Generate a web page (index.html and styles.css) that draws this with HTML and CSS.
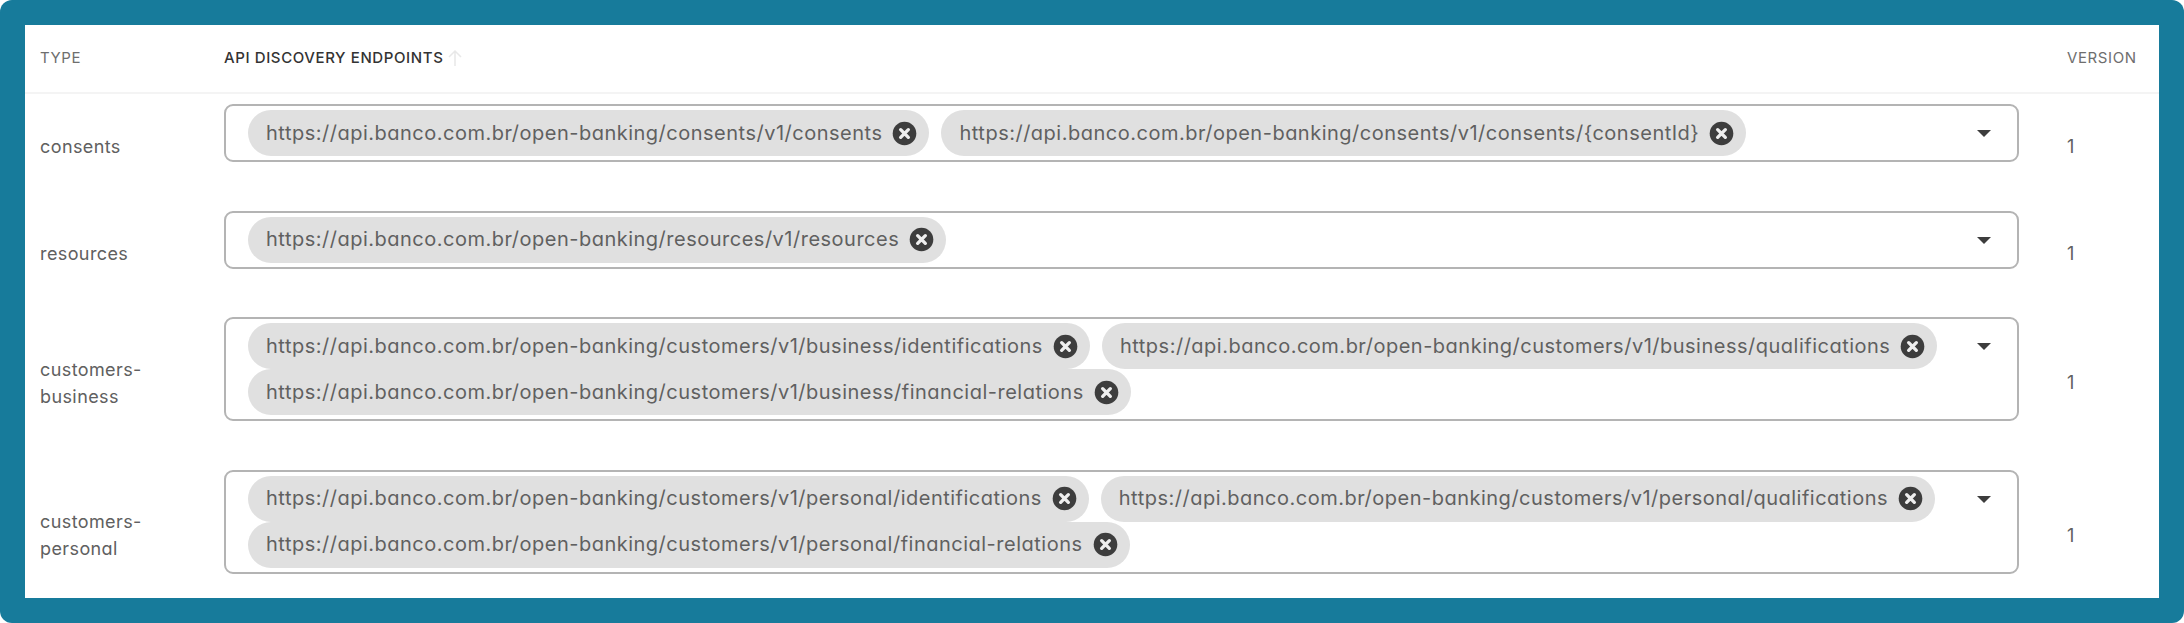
FILE: index.html
```html
<!DOCTYPE html>
<html lang="en">
<head>
  <meta charset="UTF-8" />
  <meta name="viewport" content="width=device-width, initial-scale=1.0" />
  <title>API Discovery Endpoints</title>
  <link rel="stylesheet" href="styles.css">
</head>
<body>
  <div class="frame">
    <div class="card">
      <div class="head">
        <span class="type-col">TYPE</span>
        <span class="endpoints-col">API DISCOVERY ENDPOINTS
          <svg class="sort" viewBox="0 0 16 18" width="16" height="18"><path d="M8 17V2M2 8l6-6 6 6" /></svg>
        </span>
        <span class="version-col">VERSION</span>
      </div>

      <div class="row">
        <div class="type-col">consents</div>
        <div class="field-cell">
          <div class="field">
            <div class="chips">
              <span class="chip">https://api.banco.com.br/open-banking/consents/v1/consents <svg class="x" viewBox="0 0 24 24"><use href="#close" /></svg></span>
              <span class="chip">https://api.banco.com.br/open-banking/consents/v1/consents/{consentId} <svg class="x" viewBox="0 0 24 24"><use href="#close" /></svg></span>
            </div>
            <span class="caret"></span>
          </div>
        </div>
        <div class="version-col">1</div>
      </div>

      <div class="row">
        <div class="type-col">resources</div>
        <div class="field-cell">
          <div class="field">
            <div class="chips">
              <span class="chip">https://api.banco.com.br/open-banking/resources/v1/resources <svg class="x" viewBox="0 0 24 24"><use href="#close" /></svg></span>
            </div>
            <span class="caret"></span>
          </div>
        </div>
        <div class="version-col">1</div>
      </div>

      <div class="row">
        <div class="type-col">customers-<br>business</div>
        <div class="field-cell">
          <div class="field">
            <div class="chips">
              <span class="chip">https://api.banco.com.br/open-banking/customers/v1/business/identifications <svg class="x" viewBox="0 0 24 24"><use href="#close" /></svg></span>
              <span class="chip">https://api.banco.com.br/open-banking/customers/v1/business/qualifications <svg class="x" viewBox="0 0 24 24"><use href="#close" /></svg></span>
              <span class="chip">https://api.banco.com.br/open-banking/customers/v1/business/financial-relations <svg class="x" viewBox="0 0 24 24"><use href="#close" /></svg></span>
            </div>
            <span class="caret"></span>
          </div>
        </div>
        <div class="version-col">1</div>
      </div>

      <div class="row">
        <div class="type-col">customers-<br>personal</div>
        <div class="field-cell">
          <div class="field">
            <div class="chips">
              <span class="chip">https://api.banco.com.br/open-banking/customers/v1/personal/identifications <svg class="x" viewBox="0 0 24 24"><use href="#close" /></svg></span>
              <span class="chip">https://api.banco.com.br/open-banking/customers/v1/personal/qualifications <svg class="x" viewBox="0 0 24 24"><use href="#close" /></svg></span>
              <span class="chip">https://api.banco.com.br/open-banking/customers/v1/personal/financial-relations <svg class="x" viewBox="0 0 24 24"><use href="#close" /></svg></span>
            </div>
            <span class="caret"></span>
          </div>
        </div>
        <div class="version-col">1</div>
      </div>
    </div>
  </div>

  <svg width="0" height="0" class="defs">
    <symbol id="close" viewBox="0 0 24 24">
      <circle cx="12" cy="12" r="10.5" fill="#3d3d3d" />
      <path d="M8.6 8.6l6.8 6.8m0-6.8l-6.8 6.8" fill="none" stroke="#eee" stroke-width="3" stroke-linecap="round" />
    </symbol>
  </svg>
</body>
</html>
```

FILE: styles.css
```css
* {
  box-sizing: border-box;
}
html, body {
  margin: 0;
  height: 623px;
  background: #fff;
}
body {
  font-family: Inter, "Noto Sans", sans-serif;
  font-feature-settings: "cv11";
  color: #606060;
  overflow: hidden;
}
.frame {
  height: 623px;
  padding: 25px;
  background: #177b9b;
  border-radius: 12px;
}
.card {
  height: 573px;
  background: #fff;
  overflow: hidden;
}
.head,
.row {
  display: grid;
  grid-template-columns: 199px 1795px 1fr;
  align-items: center;
}
.head {
  height: 69px;
  padding-bottom: 2px;
  border-bottom: 2px solid #f4f4f4;
  font-size: 15px;
  letter-spacing: 0.6px;
  color: #6e6e6e;
}
.head .endpoints-col {
  display: flex;
  align-items: center;
  gap: 4px;
  font-weight: 500;
  color: #333;
}
.sort {
  fill: none;
  stroke: #e8e8e8;
  stroke-width: 1.5;
}
.type-col {
  padding-left: 15px;
}
.version-col {
  padding-left: 48px;
}
.row {
  padding-top: 10px;
  margin-bottom: 11.5px;
  font-size: 18px;
  letter-spacing: 0.4px;
  line-height: 27px;
}
.field-cell {
  padding-bottom: 27px;
}
.field {
  display: flex;
  align-items: flex-start;
  justify-content: space-between;
  padding: 4px 26px 4px 22px;
  border: 2px solid #b4b4b4;
  border-radius: 9px;
}
.chips {
  display: flex;
  flex-wrap: wrap;
  column-gap: 12px;
}
.chip {
  display: inline-flex;
  align-items: center;
  gap: 9px;
  height: 46px;
  padding: 0 11px 0 18px;
  border-radius: 23px;
  background: #e0e0e0;
  font-size: 20px;
  letter-spacing: 0.5px;
  white-space: nowrap;
}
.x {
  width: 27px;
  height: 27px;
}
.caret {
  flex: none;
  width: 0;
  height: 0;
  margin-top: 20px;
  border-left: 7px solid transparent;
  border-right: 7px solid transparent;
  border-top: 7px solid #3d3d3d;
}
.defs {
  position: absolute;
}
```
